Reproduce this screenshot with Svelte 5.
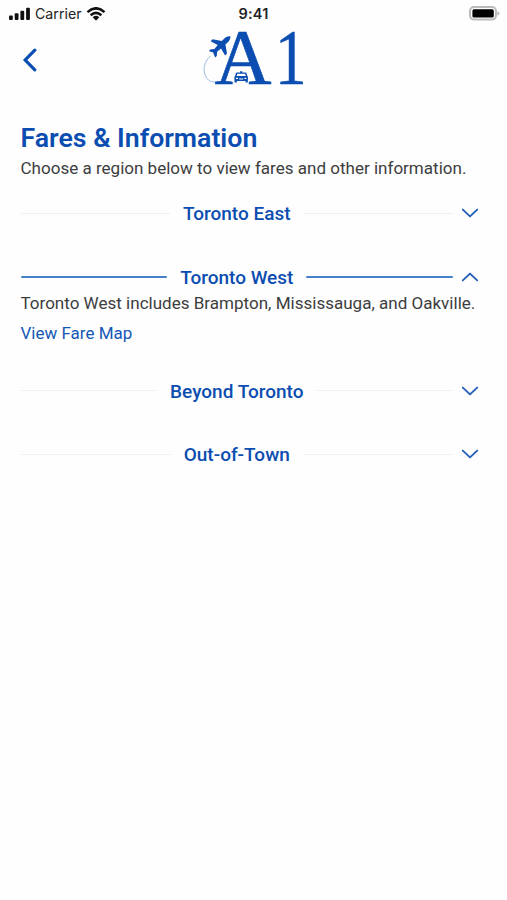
<script lang="ts">
	interface Region {
		name: string;
		description: string;
	}

	const regions: Region[] = [
		{ name: 'Toronto East', description: '' },
		{
			name: 'Toronto West',
			description: 'Toronto West includes Brampton, Mississauga, and Oakville.'
		},
		{ name: 'Beyond Toronto', description: '' },
		{ name: 'Out-of-Town', description: '' }
	];

	let openIndex = $state(1);

	function toggle(index: number) {
		openIndex = openIndex === index ? -1 : index;
	}
</script>

<div class="screen">
	<div class="status-bar">
		<div class="carrier">
			<svg width="22" height="14" viewBox="0 0 22 14" aria-hidden="true">
				<rect x="0" y="8.5" width="3.8" height="4.5" rx="1" />
				<rect x="5.7" y="6.3" width="3.8" height="6.7" rx="1" />
				<rect x="11.4" y="3.7" width="3.8" height="9.3" rx="1" />
				<rect x="17.1" y="0.7" width="3.8" height="12.3" rx="1" />
			</svg>
			<span>Carrier</span>
			<svg class="wifi" width="20" height="14" viewBox="0 0 20 14" aria-hidden="true">
				<path d="M1.5 5.1Q10-2.5 18.5 5.1M4.6 8.2Q10 3.5 15.4 8.2" />
				<path class="dot" d="M6.7 10.3Q10 7.4 13.3 10.3L10 13.7Z" />
			</svg>
		</div>
		<span class="time">9:41</span>
		<svg class="battery" width="31" height="15" viewBox="0 0 31 15" aria-hidden="true">
			<rect class="shell" x="1" y="1" width="26" height="12.6" rx="4" />
			<rect x="3.4" y="3.2" width="21.4" height="8.4" rx="1.5" />
			<path class="cap" d="M28.4 5.2Q30.6 6 30.6 7.4T28.4 9.6Z" />
		</svg>
	</div>

	<header>
		<button class="back" aria-label="Back">
			<svg width="16" height="24" viewBox="0 0 16 24">
				<path d="M12.8 2.2L3.2 12L12.8 21.8" />
			</svg>
		</button>
		<svg class="logo" width="102" height="60" viewBox="0 0 102 60" role="img" aria-label="A1">
			<path class="trail" d="M8.5 27C1.5 33 0 43 5 49.5C7 52 9 53 13 53" />
			<path
				class="plane"
				d="M28.4 7.4C26 7 23.3 8.4 21.6 10.3L19.8 12L10.6 10.2L8.6 12.2L15.8 16.1L12.4 20L8.3 20.4L6.8 22L11.2 23.6L13.1 28.5L14.8 27L15.1 22.8L19 19.4L23.1 26.6L25 24.6L23.4 15.6L25.3 13.8C27.3 12 28.6 9.6 28.4 7.4Z"
			/>
			<text x="12.6" y="53.5">A</text>
			<text transform="translate(73 53.5) scale(0.8 1)">1</text>
			<path
				class="taxi"
				d="M38.1 42.3H40.3V43.5H43.6C44.6 43.5 44.9 45.7 45.2 46.8C46.5 47.4 45.8 49.8 45.8 53.4H43.6V52H34.8V53.4H32.6C32.6 49.8 31.9 47.4 33.2 46.8C33.5 45.7 33.8 43.5 34.8 43.5H38.1Z"
			/>
			<path class="glass" d="M35.3 44.8H43.1L43.8 47H34.6ZM34 48.8H36V50H34ZM42.4 48.8H44.4V50H42.4ZM37.2 49.6H41.2V50.4H37.2Z" />
		</svg>
	</header>

	<main>
		<h1>Fares &amp; Information</h1>
		<p class="intro">Choose a region below to view fares and other information.</p>

		{#each regions as region, i}
			{@const isOpen = i === openIndex}
			<section class:open={isOpen}>
				<button class="region" onclick={() => toggle(i)} aria-expanded={isOpen}>
					<span class="line"></span>
					<span class="name">{region.name}</span>
					<span class="line"></span>
					<svg class="chevron" width="18" height="12" viewBox="0 0 18 12">
						<path d="M1.8 2.6L9 9.4L16.2 2.6" />
					</svg>
				</button>
				{#if isOpen}
					<div class="details">
						<p>{region.description}</p>
						<a href="#map">View Fare Map</a>
					</div>
				{/if}
			</section>
		{/each}
	</main>
</div>

<style>
	:global(body) {
		margin: 0;
		background: #fefefe;
	}

	.screen {
		min-height: 900px;
		box-sizing: border-box;
		font-family: Roboto, 'Liberation Sans', sans-serif;
		color: #3d3d40;
	}

	button {
		padding: 0;
		border: 0;
		background: none;
		font: inherit;
		color: inherit;
		cursor: pointer;
	}

	.status-bar {
		display: grid;
		grid-template-columns: 1fr auto 1fr;
		align-items: center;
		height: 27px;
		padding: 0 7px 0 9px;
		font-family: Inter, 'Liberation Sans', sans-serif;
		font-size: 14.2px;
		color: #222;
	}

	.carrier {
		display: flex;
		align-items: center;
		gap: 4px;
	}

	.carrier svg {
		fill: #111;
	}

	.wifi path {
		fill: none;
		stroke: #111;
		stroke-width: 2.6;
	}

	.wifi .dot {
		fill: #111;
		stroke: none;
	}

	.time {
		margin-right: 2px;
		font-size: 14.5px;
		font-weight: 600;
		letter-spacing: 0.2px;
	}

	.battery {
		justify-self: end;
	}

	.battery .shell {
		fill: #fff;
		stroke: #bbb;
		stroke-width: 2;
	}

	.battery .cap {
		fill: #bbb;
	}

	header {
		display: grid;
		grid-template-columns: 1fr auto 1fr;
		align-items: center;
		height: 66px;
		padding: 0 20px;
	}

	.back {
		display: flex;
		justify-self: start;
		margin-left: 2px;
	}

	.back path {
		fill: none;
		stroke: #0b4db0;
		stroke-width: 3.2;
		stroke-linecap: round;
	}

	.logo {
		margin: 0 2px 2px 0;
		overflow: visible;
		fill: #0b4db0;
		font-family: 'Liberation Serif', serif;
		font-size: 79px;
	}

	.logo text {
		stroke: #0b4db0;
		stroke-width: 0.6;
	}

	.logo .trail {
		fill: none;
		stroke: #9fbce3;
		stroke-width: 1;
	}

	.logo .glass {
		fill: #fff;
	}

	main {
		padding: 28px 28px 0 20.5px;
	}

	h1 {
		margin: 0;
		font-size: 26.7px;
		font-weight: 600;
		line-height: 34px;
		color: #0b4db0;
	}

	p {
		margin: 0;
		font-size: 17.05px;
		line-height: 28px;
		white-space: nowrap;
	}

	.intro {
		margin-top: -1px;
		margin-bottom: 16px;
	}

	section {
		margin-bottom: 33.5px;
	}

	section.open {
		margin-bottom: 30.2px;
	}

	.region {
		display: flex;
		align-items: center;
		width: 100%;
		height: 30px;
	}

	.line {
		flex: 1;
		height: 1px;
		background: #f0f0f1;
	}

	.open .line {
		height: 2px;
		border-radius: 1px;
		background: #4680c9;
	}

	.name {
		padding: 1px 13px 0;
		font-size: 19px;
		font-weight: 500;
		color: #0b4db0;
	}

	.chevron {
		margin-left: 8px;
	}

	.chevron path {
		fill: none;
		stroke: #2560b8;
		stroke-width: 1.9;
		stroke-linecap: round;
		stroke-linejoin: round;
	}

	.open .chevron {
		transform: rotate(180deg);
	}

	.details p {
		line-height: 22px;
	}

	.details a {
		display: block;
		padding-top: 6px;
		font-size: 17px;
		line-height: 26px;
		color: #1557b7;
		text-decoration: none;
	}
</style>
